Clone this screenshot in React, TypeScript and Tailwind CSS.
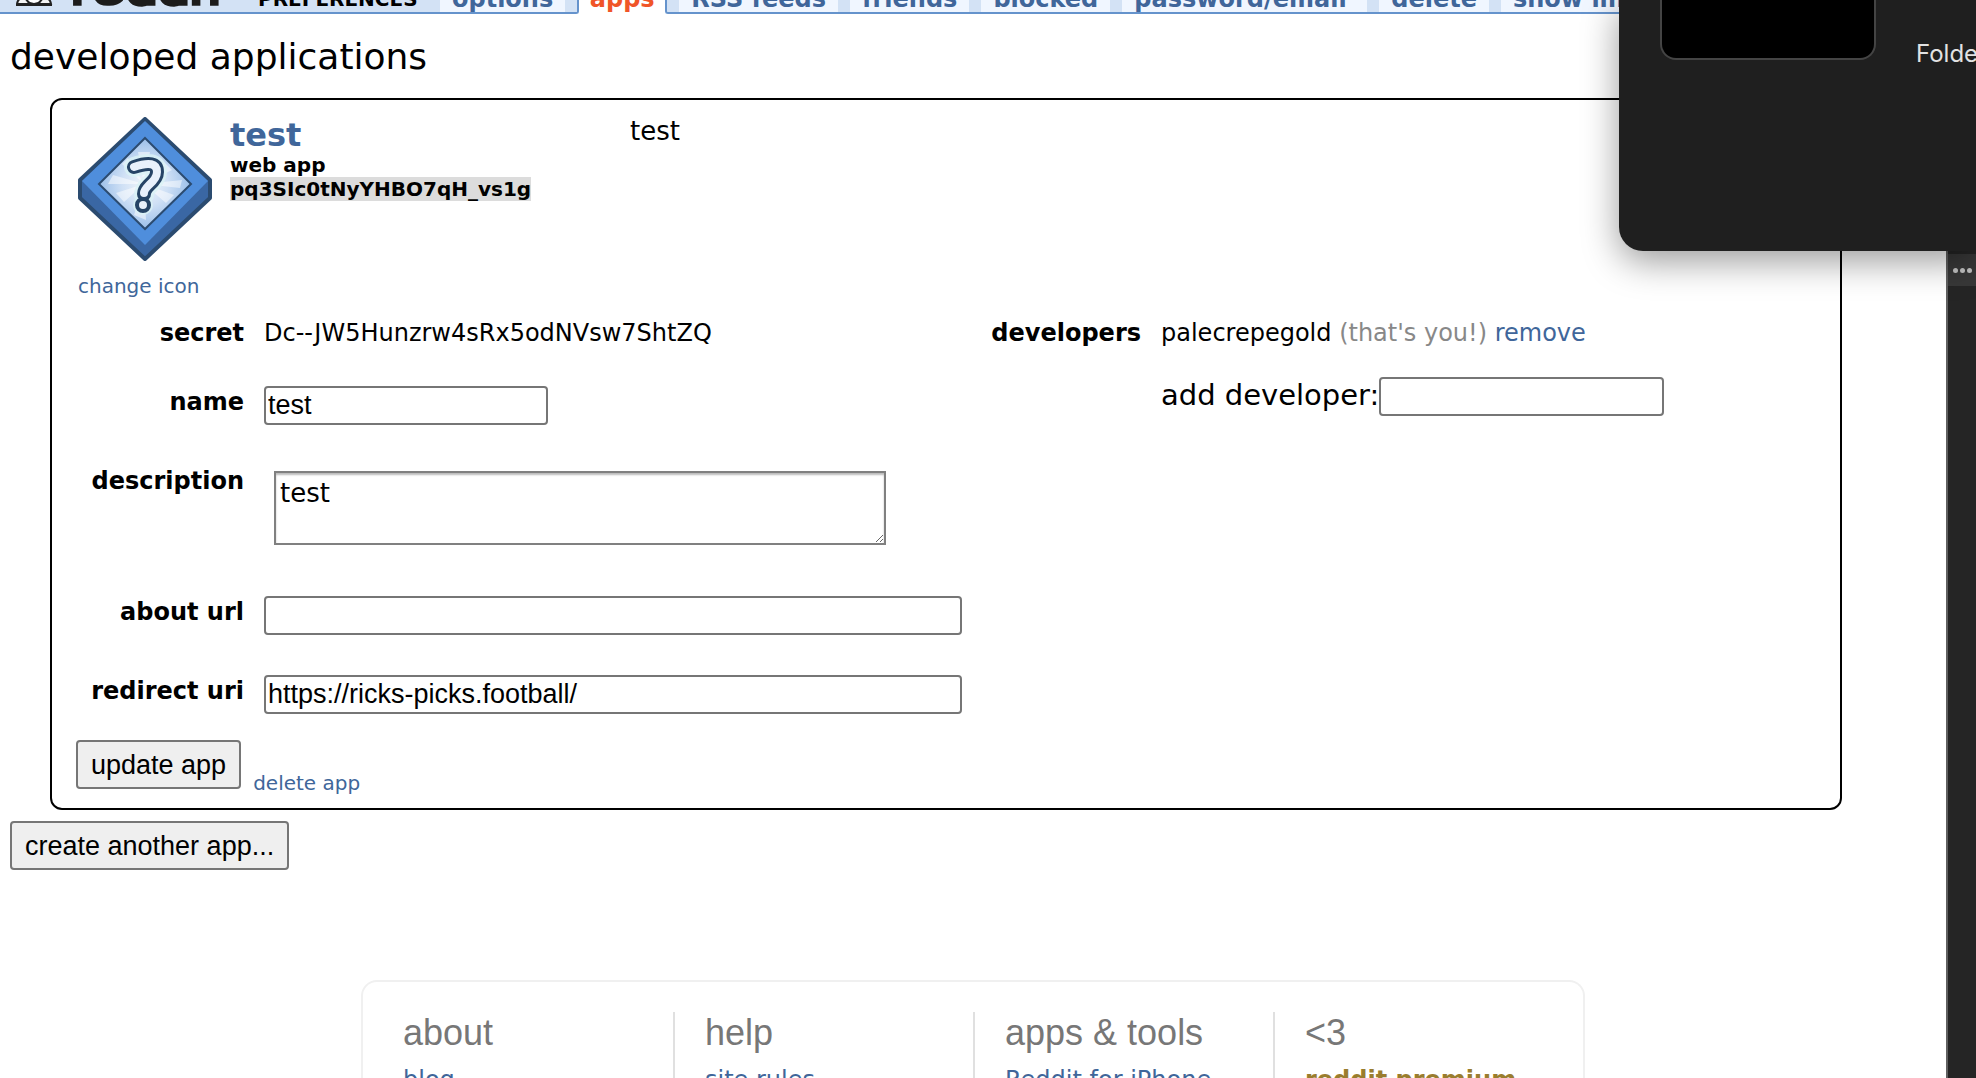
import React from "react";

const tabs = ["RSS feeds", "friends", "blocked", "password/email", "delete", "show images"];

const footerColumns = [
  { title: "about", link: "blog" },
  { title: "help", link: "site rules" },
  { title: "apps & tools", link: "Reddit for iPhone" },
  { title: "<3", link: "reddit premium", gold: true },
];

const fieldClass =
  "h-[39px] rounded-[4px] border-2 border-[#767676] bg-white px-0.5 font-['Liberation_Sans',Arial,sans-serif] text-[27px] leading-[30px] text-black";
const buttonClass =
  "h-[49px] rounded-[4px] border-2 border-[#767676] bg-[#efefef] px-[13px] font-['Liberation_Sans',Arial,sans-serif] text-[27px] leading-[42px] text-black";
const labelClass = "w-[168px] shrink-0 text-right text-2xl leading-8 font-bold";

function Tab({ label }: { label: string }) {
  return (
    <a
      href="#"
      className={
        label === "password/email"
          ? "w-[245px] shrink-0 bg-[#f0f6ff] px-3 pb-px text-2xl leading-6 font-bold whitespace-nowrap text-[#40669a]"
          : "shrink-0 bg-[#f0f6ff] px-3 pb-px text-2xl leading-6 font-bold whitespace-nowrap text-[#40669a]"
      }
    >
      {label}
    </a>
  );
}

function Header() {
  return (
    <header className="flex h-3.5 items-end overflow-hidden">
      <div className="flex h-3.5 shrink-0 items-end gap-3 rounded-br-[3px] border-r-2 border-b-2 border-[#6593cc] bg-[#d3e2f5] pr-3 pl-4">
        <a href="#" aria-label="reddit home" className="flex items-end">
          <svg width="210" height="44" viewBox="0 0 210 44" className="block">
            <ellipse cx="18" cy="19" rx="13" ry="17" fill="#fff" stroke="#222" strokeWidth="2" />
            <path d="M1 36Q2 29 9 30L14 36Z M35 36Q34 29 27 30L22 36Z" fill="#f4f4f4" stroke="#222" strokeWidth="2" />
            <path d="M0 37H36" stroke="#222" strokeWidth="2" />
            <g fill="none" stroke="#1c1c1c" strokeWidth="8" transform="translate(-5 0) scale(1.07 1.02)">
              <path d="M62 37V16Q64 12 73 13" />
              <path d="M103 24H80Q80 13 91 13Q103 13 103 24M80 24Q82 34 92 33Q98 33 102 29" />
              <path d="M131 0V37M131 24Q131 14 122 14Q112 14 112 24Q112 34 122 34Q131 33 131 24" />
              <path d="M161 0V37M161 24Q161 14 152 14Q142 14 142 24Q142 34 152 34Q161 33 161 24" />
              <path d="M173 12V37M190 4V37M183 14H198" />
            </g>
          </svg>
        </a>
        <span className="w-[190px] pb-px pl-5 text-xl leading-6 font-bold text-black">PREFERENCES</span>
        <Tab label="options" />
      </div>
      <a href="#" className="w-[86px] shrink-0 pb-[3px] text-center text-2xl leading-6 font-bold text-[#f05528]">
        apps
      </a>
      <nav className="flex h-3.5 grow items-end gap-3 rounded-bl-[3px] border-b-2 border-l-2 border-[#6593cc] bg-[#d3e2f5] pl-3">
        {tabs.map((t) => (
          <Tab key={t} label={t} />
        ))}
      </nav>
    </header>
  );
}

function AppIcon() {
  return (
    <svg width="134" height="144" viewBox="0 0 134 144" className="block">
      <defs>
        <radialGradient id="glow">
          <stop offset="0" stopColor="#f2f6fb" />
          <stop offset="0.5" stopColor="#cfe0f5" />
          <stop offset="1" stopColor="#9bbfe9" />
        </radialGradient>
      </defs>
      <path d="M67 2L132 63V81L67 142L2 81V63Z" fill="#3a67a4" stroke="#2b4b70" strokeWidth="4" strokeLinejoin="round" />
      <path d="M67 4L130 64L67 128L4 64Z" fill="#4f8edc" />
      <path d="M67 21L113 67L67 112L21 67Z" fill="url(#glow)" stroke="#2b4b70" strokeWidth="2" />
      <path
        d="M66 67L60 35L72 35Z M66 67L35 58L30 67Z M66 67L38 76L46 85Z M66 67L56 98L68 103Z M66 67L88 86L96 78Z M66 67L104 63L102 71Z M66 67L86 45L94 53Z M66 67L44 47L50 41Z"
        fill="#fff"
        opacity="0.5"
      />
      <g fill="none" strokeLinecap="round" strokeLinejoin="round">
        <path d="M56 50Q79 42 79 55Q79 61 71 68Q66 73 66 78M65 88V88" stroke="#d9f2f5" strokeWidth="20" opacity="0.8" />
        <path d="M56 50Q79 42 79 55Q79 61 71 68Q66 73 66 77" stroke="#264466" strokeWidth="14" />
        <path d="M56 50Q79 42 79 55Q79 61 71 68Q66 73 66 76" stroke="#e8f0fb" strokeWidth="8" />
        <circle cx="65" cy="88" r="6" stroke="#264466" strokeWidth="4" fill="#e8f0fb" />
      </g>
    </svg>
  );
}

function AppCard() {
  return (
    <section className="mr-[104px] ml-[50px] rounded-xl border-2 border-black pt-[17px] pb-[11px] pl-6">
      <div className="flex items-start pl-0.5">
        <div className="w-[152px] shrink-0">
          <AppIcon />
          <a href="#" className="mt-[11px] block text-xl leading-7 text-[#40669a]">
            change icon
          </a>
        </div>
        <div className="w-[400px] shrink-0 text-xl leading-6 font-bold">
          <h2 className="text-[32px] leading-9">
            <a href="#" className="text-[#40669a]">test</a>
          </h2>
          <p>web app</p>
          <p>
            <span className="bg-[#dcdcdc]">pq3SIc0tNyYHBO7qH_vs1g</span>
          </p>
        </div>
        <p className="text-[26px] leading-7">test</p>
      </div>

      <div className="flex items-start">
        <form className="w-[888px] shrink-0" onSubmit={(e) => e.preventDefault()}>
          <div className="flex gap-5 pt-[17px] text-2xl leading-8">
            <span className={labelClass}>secret</span>
            <span>Dc--JW5Hunzrw4sRx5odNVsw7ShtZQ</span>
          </div>
          <div className="mt-[37px] flex items-start gap-5">
            <label htmlFor="name" className={labelClass}>name</label>
            <input id="name" defaultValue="test" className={`${fieldClass} w-[284px]`} />
          </div>
          <div className="mt-10 flex items-start gap-5">
            <label htmlFor="description" className={labelClass}>description</label>
            <textarea
              id="description"
              defaultValue="test"
              className="mt-1.5 ml-2.5 h-[74px] w-[612px] resize border-2 border-[#808080] bg-white px-1 py-1 text-[26px] leading-8 shadow-[inset_0_2px_2px_#bbb]"
            />
          </div>
          <div className="mt-[51px] flex items-start gap-5">
            <label htmlFor="about-url" className={labelClass}>about url</label>
            <input id="about-url" className={`${fieldClass} w-[698px]`} />
          </div>
          <div className="mt-10 flex items-start gap-5">
            <label htmlFor="redirect-uri" className={labelClass}>redirect uri</label>
            <input
              id="redirect-uri"
              defaultValue="https://ricks-picks.football/"
              className={`${fieldClass} w-[698px]`}
            />
          </div>
          <div className="mt-[26px] flex items-start gap-3">
            <button type="submit" className={buttonClass}>update app</button>
            <a href="#" className="pt-[29px] text-xl leading-7 text-[#40669a]">delete app</a>
          </div>
        </form>

        <div className="flex gap-5 pt-[17px] text-2xl leading-8">
          <span className="w-[177px] text-right font-bold">developers</span>
          <div>
            <p>
              palecrepegold <span className="text-[#888]">(that's you!)</span>{" "}
              <a href="#" className="text-[#40669a]">remove</a>
            </p>
            <div className="mt-7 flex items-start">
              <label htmlFor="add-developer" className="text-[29px] leading-9">add developer:</label>
              <input id="add-developer" className={`${fieldClass} w-[285px]`} />
            </div>
          </div>
        </div>
      </div>
    </section>
  );
}

function Footer() {
  return (
    <footer className="mx-auto mt-[110px] flex w-[1224px] rounded-t-2xl border-2 border-b-0 border-[#f0f0f0] px-2.5 pt-[30px]">
      {footerColumns.map((c, i) => (
        <div
          key={c.title}
          className={
            i === 0
              ? "w-[300px] shrink-0 pl-[30px]"
              : "w-[300px] shrink-0 border-l-2 border-[#e0e0e0] pl-[30px]"
          }
        >
          <h3 className="font-['Liberation_Sans',Arial,sans-serif] text-4xl leading-[42px] text-[#777]">{c.title}</h3>
          <a
            href="#"
            className={
              c.gold
                ? "mt-3 block text-2xl leading-7 font-bold text-[#9a7d2e]"
                : "mt-3 block text-2xl leading-7 text-[#40669a]"
            }
          >
            {c.link}
          </a>
        </div>
      ))}
    </footer>
  );
}

export default function App() {
  return (
    <div className="relative flex h-screen overflow-hidden bg-white font-['Verdana','DejaVu_Sans',sans-serif] text-black">
      <main className="min-w-0 grow overflow-hidden">
        <Header />
        <h1 className="mt-[21px] mb-[19px] ml-2.5 text-4xl leading-11">developed applications</h1>
        <AppCard />
        <button type="button" className={`${buttonClass} mt-[11px] ml-2.5 block`}>
          create another app...
        </button>
        <Footer />
      </main>

      <aside className="w-[30px] shrink-0 border-l-2 border-[#606060] bg-[#252525] pt-[254px]">
        <button type="button" aria-label="More" className="flex h-8 w-full items-center justify-center gap-0.5 bg-[#383838]">
          <span className="size-[5px] rounded-full bg-[#c4c4c4]" />
          <span className="size-[5px] rounded-full bg-[#c4c4c4]" />
          <span className="size-[5px] rounded-full bg-[#c4c4c4]" />
        </button>
      </aside>

      <div className="absolute top-0 right-0 flex h-[251px] w-[357px] overflow-visible rounded-bl-3xl bg-[#1f1f1f] pl-[41px] shadow-[0_10px_36px_rgba(0,0,0,0.4)]">
        <div className="h-[60px] w-[216px] shrink-0 rounded-b-2xl border-2 border-t-0 border-[#444] bg-black" />
        <span className="ml-10 overflow-hidden pt-[38px] font-['Inter',sans-serif] text-2xl leading-8 text-[#e2e2e2]">
          Folde
        </span>
      </div>
    </div>
  );
}
